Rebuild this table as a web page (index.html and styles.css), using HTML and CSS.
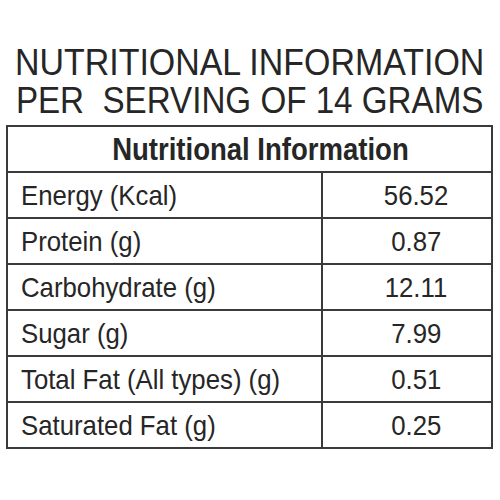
FILE: index.html
```html
<!DOCTYPE html>
<html lang="en">
<head>
    <meta charset="UTF-8">
    <title>Nutritional Information</title>
    <link rel="stylesheet" href="styles.css">
</head>
<body>

<div class="label">
    <h1 class="title">
        <span class="narrow wide">NUTRITIONAL INFORMATION</span><br>
        <span class="narrow">PER&nbsp; SERVING OF 14 GRAMS</span>
    </h1>

    <table class="facts">
        <thead>
            <tr>
                <th colspan="2"><span class="narrow">Nutritional Information</span></th>
            </tr>
        </thead>
        <tbody>
            <tr>
                <td><span class="narrow">Energy (Kcal)</span></td>
                <td class="value"><span class="narrow">56.52</span></td>
            </tr>
            <tr>
                <td><span class="narrow">Protein (g)</span></td>
                <td class="value"><span class="narrow">0.87</span></td>
            </tr>
            <tr>
                <td><span class="narrow">Carbohydrate (g)</span></td>
                <td class="value"><span class="narrow">12.11</span></td>
            </tr>
            <tr>
                <td><span class="narrow">Sugar (g)</span></td>
                <td class="value"><span class="narrow">7.99</span></td>
            </tr>
            <tr>
                <td><span class="narrow">Total Fat (All types) (g)</span></td>
                <td class="value"><span class="narrow">0.51</span></td>
            </tr>
            <tr>
                <td><span class="narrow">Saturated Fat (g)</span></td>
                <td class="value"><span class="narrow">0.25</span></td>
            </tr>
        </tbody>
    </table>
</div>

</body>
</html>
```

FILE: styles.css
```css
body {
    margin: 0;
    background: #fff;
    color: #262626;
    font-family: "Liberation Sans", Arial, sans-serif;
}

.label {
    padding: 43px 0 0 6px;
    overflow: hidden;
}

.narrow {
    display: inline-block;
    white-space: nowrap;
}

.title {
    width: 560px;
    margin: 0 0 6px -36px;
    font-size: 37.7px;
    font-weight: normal;
    line-height: 38px;
    text-align: center;
}

.title .narrow {
    transform: scaleX(0.88);
}

.title .narrow.wide {
    transform: scaleX(0.9);
}

.facts {
    width: 487px;
    border-collapse: collapse;
}

.facts th,
.facts td {
    border: 2px solid #3a3a3a;
    padding: 0;
}

.facts th {
    height: 44px;
    font-size: 32px;
    font-weight: bold;
    padding-left: 21px;
}

.facts th .narrow {
    transform: scaleX(0.86);
}

.facts td {
    height: 42px;
    font-size: 28px;
    padding: 2px 0 0 13px;
}

.facts td .narrow {
    transform: scaleX(0.92);
    transform-origin: left center;
}

.facts td.value {
    width: 150px;
    text-align: center;
    padding-left: 18px;
}

.facts td.value .narrow {
    transform-origin: center;
}
```
